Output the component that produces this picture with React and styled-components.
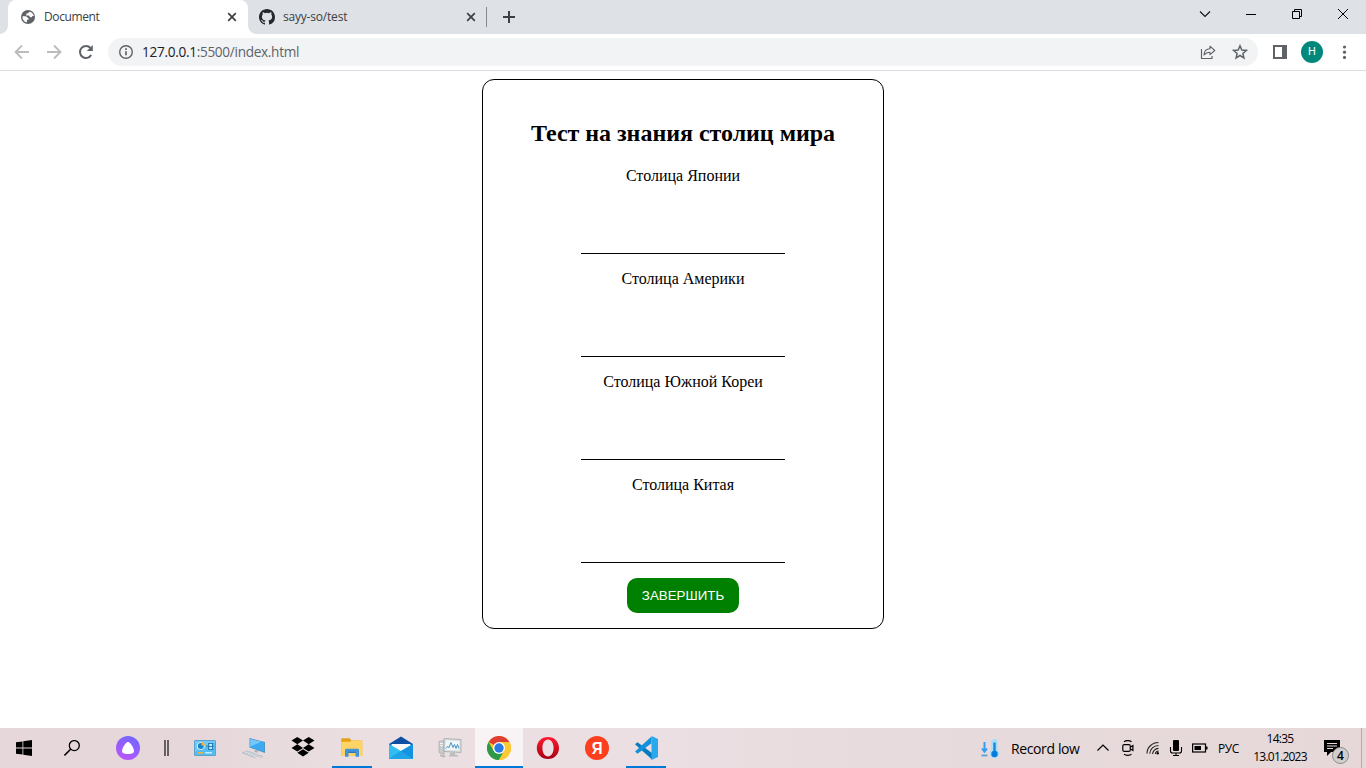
import React from "react";
import styled, { createGlobalStyle } from "styled-components";

const GlobalStyle = createGlobalStyle`
  * { box-sizing: border-box; }
  body { margin: 0; background: #fff; overflow: hidden; }
  svg { display: block; flex: none; }
`;
const ui = `"Open Sans", "Noto Sans", sans-serif`;

const Screen = styled.div`
  width: 1366px;
  height: 768px;
  display: flex;
  flex-direction: column;
  font-family: ${ui};
`;

/* Browser chrome */
const TabStrip = styled.div`
  height: 34px;
  flex: none;
  display: flex;
  background: #dee1e6;
  padding-left: 8px;
`;
const Tab = styled.div`
  position: relative;
  width: ${(p) => p.$width}px;
  height: 34px;
  display: flex;
  align-items: center;
  padding: 0 ${(p) => p.$right}px 0 ${(p) => p.$left}px;
  background: ${(p) => (p.$active ? "#fff" : "transparent")};
  border-radius: 8px 8px 0 0;
  &::before, &::after {
    content: "";
    display: ${(p) => (p.$active ? "block" : "none")};
    position: absolute;
    bottom: 0;
    width: 8px;
    height: 8px;
  }
  &::before { left: -8px; background: radial-gradient(circle at 0 0, transparent 7.5px, #fff 8px); }
  &::after { right: -8px; background: radial-gradient(circle at 100% 0, transparent 7.5px, #fff 8px); }
`;
const TabTitle = styled.span`
  flex: 1;
  margin-left: ${(p) => p.$gap}px;
  font-size: 12px;
  line-height: 16px;
  letter-spacing: ${(p) => p.$spacing}px;
  color: #3c4043;
  white-space: nowrap;
`;
const TabDivider = styled.div`
  width: 1px;
  height: 20px;
  margin-top: 7px;
  background: #868a90;
`;
const NewTab = styled.div`
  margin: 11px 0 0 16px;
`;
const WindowControls = styled.div`
  display: flex;
  align-items: center;
  height: 28px;
  margin-left: auto;
`;
const WindowButton = styled.div`
  width: 46px;
  display: flex;
  justify-content: center;
`;
const Toolbar = styled.div`
  height: 37px;
  flex: none;
  display: flex;
  align-items: center;
  border-bottom: 1px solid #dadce0;
  padding-left: 14px;
`;
const NavButtons = styled.div`
  display: flex;
  flex: none;
  gap: 16px;
  width: 94px;
`;
const AddressBar = styled.div`
  width: 1150px;
  height: 28px;
  flex: none;
  border-radius: 14px;
  background: #f1f3f4;
  display: flex;
  align-items: center;
  padding: 0 10px;
`;
const Url = styled.div`
  flex: 1;
  margin-left: 8px;
  font-size: 13.6px;
  line-height: 20px;
  letter-spacing: -0.3px;
  color: #5f6368;
`;
const Host = styled.span`
  color: #202124;
`;
const AddressActions = styled.div`
  display: flex;
  align-items: center;
  gap: 16px;
`;
const ToolbarActions = styled.div`
  display: flex;
  flex: none;
  align-items: center;
  margin-left: 14px;
`;
const Avatar = styled.div`
  width: 22px;
  height: 22px;
  margin: 0 13px 0 13px;
  border-radius: 50%;
  background: #00897b;
  color: #fff;
  font: 11px/22px Roboto, sans-serif;
  text-align: center;
`;

/* Page */
const Page = styled.main`
  flex: 1;
  padding-top: 8px;
  background: #fff;
  font-family: "Liberation Serif", "Times New Roman", serif;
  color: #000;
`;
const QuizForm = styled.form`
  width: 402px;
  height: 550px;
  margin: 0 auto;
  padding: 40px 15px 15px;
  border: 1px solid #000;
  border-radius: 12px;
  display: flex;
  flex-direction: column;
  align-items: center;
`;
const Heading = styled.h2`
  margin: 0 0 20px;
  font-size: 24px;
  line-height: 27px;
  letter-spacing: -0.03px;
  white-space: nowrap;
`;
const Question = styled.label`
  display: flex;
  flex-direction: column;
  align-items: center;
  height: 103px;
  flex: none;
  font-size: 16px;
  line-height: 18px;
`;
const Answer = styled.input`
  width: 204px;
  height: 53px;
  margin-top: 16px;
  padding: 0;
  border: 0;
  border-bottom: 1px solid #000;
  border-radius: 0;
  background: transparent;
  outline: 0;
`;
const SubmitButton = styled.button`
  width: 112px;
  height: 35px;
  flex: none;
  margin-top: -1px;
  padding: 0;
  border: 0;
  border-radius: 10px;
  background: #008000;
  color: #fff;
  font: 13.333px "Liberation Sans", Arial, sans-serif;
`;

/* Taskbar */
const Taskbar = styled.footer`
  height: 40px;
  flex: none;
  display: flex;
  background: linear-gradient(90deg, #e6d8da 0%, #e6d8da 15%, #ebdfe2 27%, #ecdfe3 48%, #e7dadc 70%, #e6d8d8 100%);
  color: #000;
`;
const StartArea = styled.div`
  display: flex;
  width: 181px;
`;
const Slot = styled.div`
  width: ${(p) => p.$width || 48}px;
  height: 40px;
  display: flex;
  align-items: center;
  justify-content: center;
`;
const Apps = styled.div`
  display: flex;
  gap: 1px;
`;
const AppSlot = styled.div`
  width: 48px;
  height: 40px;
  display: flex;
  flex-direction: column;
  align-items: center;
  justify-content: space-between;
  background: ${(p) => (p.$active ? "#f8f3f4" : "transparent")};
  &::after {
    content: "";
    width: ${(p) => (p.$active ? 48 : 40)}px;
    height: 2px;
    background: ${(p) => (p.$active || p.$running ? "#0078d7" : "transparent")};
  }
`;
const AppIcon = styled.div`
  padding-top: 8px;
`;
const Tray = styled.div`
  display: flex;
  align-items: center;
  margin-left: auto;
`;
const Weather = styled.div`
  display: flex;
  align-items: center;
  width: 116px;
  padding-top: 1px;
  font-size: 14px;
  line-height: 20px;
  letter-spacing: -0.38px;
  white-space: nowrap;
  gap: 11px;
`;
const TrayIcons = styled.div`
  display: flex;
  align-items: center;
`;
const Language = styled.div`
  width: 24px;
  margin-left: 10px;
  font-size: 12px;
  letter-spacing: -0.4px;
`;
const Clock = styled.div`
  width: 56px;
  margin-left: 10px;
  font-size: 12px;
  line-height: 18px;
  letter-spacing: -0.76px;
  text-align: center;
  white-space: nowrap;
`;
const Notifications = styled.div`
  position: relative;
  width: 25px;
  height: 40px;
  margin-left: 16px;
  padding-top: 12px;
`;
const Badge = styled.span`
  position: absolute;
  left: 8px;
  top: 19px;
  width: 17px;
  height: 17px;
  border: 1px solid #8b8b8b;
  border-radius: 50%;
  background: #d0cdce;
  font-size: 12px;
  line-height: 15px;
  font-weight: 600;
  text-align: center;
`;
const ShowDesktop = styled.div`
  width: 5px;
  height: 40px;
  margin-left: 12px;
  border-left: 1px solid #b5a9aa;
`;

const Svg = ({ w = 24, h = w, box = `0 0 ${w} ${h}`, children, ...rest }) => (
  <svg width={w} height={h} viewBox={box} fill="none" {...rest}>{children}</svg>
);

const Close = () => (
  <Svg w={10}><path d="M1.2 1.2l7.6 7.6M8.8 1.2L1.2 8.8" stroke="#3c4043" strokeWidth="1.7" /></Svg>
);
const Globe = () => (
  <Svg w={14}>
    <circle cx="7" cy="7" r="7" fill="#5f6368" />
    <path d="M8.500 1.700L7 3.300 5.600 3.500 5 5.600h3.100l.9 1.600h1.600l.9-1.200h1.300C12.500 3.700 10.800 2.100 8.500 1.700z" fill="#fff" />
    <path d="M1.500 6.300h3.600l2.500 2.200v1.300H5.900v2.600C3 12 1.300 9.300 1.500 6.300z" fill="#fff" />
  </Svg>
);
const Github = () => (
  <Svg w={16}>
    <path fill="#24292f" d="M8 0C3.58 0 0 3.58 0 8c0 3.54 2.29 6.53 5.47 7.59.4.07.55-.17.55-.38 0-.19-.01-.82-.01-1.49-2.01.37-2.53-.49-2.69-.94-.09-.23-.48-.94-.82-1.13-.28-.15-.68-.52-.01-.53.63-.01 1.08.58 1.23.82.72 1.21 1.87.87 2.33.66.07-.52.28-.87.51-1.07-1.78-.2-3.64-.89-3.64-3.95 0-.87.31-1.59.82-2.15-.08-.2-.36-1.02.08-2.12 0 0 .67-.21 2.2.82a7.4 7.4 0 0 1 4 0c1.53-1.04 2.2-.82 2.2-.82.44 1.1.16 1.92.08 2.12.51.56.82 1.27.82 2.15 0 3.07-1.87 3.75-3.65 3.95.29.25.54.73.54 1.48 0 1.07-.01 1.93-.01 2.2 0 .21.15.46.55.38A8 8 0 0 0 16 8c0-4.42-3.58-8-8-8z" />
  </Svg>
);
const Arrow = ({ flip }) => (
  <Svg w={16}>
    <path d={flip ? "M1 8h13M8 1.5L14.5 8 8 14.5" : "M15 8H2M8 1.5L1.5 8 8 14.5"} stroke="#babcbe" strokeWidth="1.8" />
  </Svg>
);
const Reload = () => (
  <Svg w={16}>
    <path d="M13.2 11A6 6 0 1 1 12.5 4" stroke="#5f6368" strokeWidth="2" />
    <path d="M14.8 1v6H8.8z" fill="#5f6368" />
  </Svg>
);
const Info = () => (
  <Svg w={16}>
    <circle cx="8" cy="8" r="6.3" stroke="#5f6368" strokeWidth="1.4" />
    <path d="M8 7.2v4M8 4.3v1.6" stroke="#5f6368" strokeWidth="1.7" />
  </Svg>
);
const Share = () => (
  <Svg w={16}>
    <path d="M1.500 5v9.500h10.500V12" stroke="#5f6368" strokeWidth="1.2" />
    <path d="M4 11c.2-3.8 2.200-6 6-6.200V2.200l4.800 4.300L10 10.700V8.200C7.500 8.200 5.600 9 4 11z" stroke="#5f6368" strokeWidth="1.100" strokeLinejoin="round" />
  </Svg>
);
const Star = () => (
  <Svg w={16}>
    <path d="M8 1.800l1.800 4.200 4.500.4-3.400 3 1 4.500L8 11.500l-3.900 2.400 1-4.500-3.400-3 4.500-.4z" stroke="#5f6368" strokeWidth="1.500" />
  </Svg>
);

const Windows = () => (
  <Svg w={16}>
    <path fill="#000" d="M0 2.300l6.500-.9v6.200H0zM7.300 1.300L16 0v7.600H7.300zM0 8.400h6.500v6.200L0 13.700zM7.300 8.400H16V16l-8.700-1.300z" />
  </Svg>
);
const Search = () => (
  <Svg w={16}>
    <circle cx="10.300" cy="5.600" r="5" stroke="#000" strokeWidth="1.300" />
    <path d="M6.600 9.300L.4 15.500" stroke="#000" strokeWidth="1.500" />
  </Svg>
);
const Alice = () => (
  <Svg w={24}>
    <defs><linearGradient id="alice" x1=".75" y1="0" x2=".25" y2="1"><stop stopColor="#6f67ff" /><stop offset="1" stopColor="#bd54fc" /></linearGradient></defs>
    <circle cx="12" cy="12" r="12" fill="url(#alice)" />
    <path d="M12 6c2.400 0 6 6.500 6 9 0 2.200-2.500 3-6 3s-6-.8-6-3c0-2.500 3.600-9 6-9z" fill="#fff" />
  </Svg>
);
const ControlPanel = () => (
  <Svg w={24}>
    <rect x="1.500" y="4.500" width="21" height="15" rx=".5" fill="#55bdf2" stroke="#5ba3cc" />
    <path d="M2 5h20v2L2 16z" fill="#8bd6fa" opacity=".5" />
    <circle cx="7.800" cy="10" r="3.800" fill="#e9f7ff" />
    <circle cx="7.800" cy="10" r="3" fill="#1680c9" />
    <path d="M8.500 6v3.500h3.300A3.500 3.500 0 0 0 8.500 6z" fill="#f6b32b" />
    <path d="M13 10h2M15.500 7v7M15.500 7.500h5M15.500 10.500h5M15.500 13.500h5M19.500 7.500v6" stroke="#1c6fa8" strokeWidth=".8" />
    <path d="M16.500 8.200h2.500v1.500h-2.500zM16.500 11.200h2.500v1.500h-2.500z" fill="#e3f7ff" />
    <path d="M5 16.800h5.500" stroke="#ffb32e" strokeWidth="1.400" /><path d="M12 16.800h7" stroke="#e2f6ff" strokeWidth="1.200" />
  </Svg>
);
const ThisPc = () => (
  <Svg w={24}>
    <path d="M7.500 2L23 6v11L7.500 11.500z" fill="#4f93be" />
    <path d="M8.200 2.900l14 3.700V16l-14-5z" fill="#3caaf0" />
    <path d="M8.200 2.900l11 2.900-11 4.900z" fill="#7fd0fb" opacity=".8" />
    <path d="M13.500 13.700l3 1-1 2-3.500-1z" fill="#a7b4bc" />
    <path d="M.5 16.800l5.300-1.800 10.500 4.200-4 2.400z" fill="#e7edf0" stroke="#a3afb7" strokeWidth=".7" />
    <path d="M2.500 16.500l9.500 4M4.500 15.800l9.500 3.800M3.500 18l4-1.600M6.500 19.200l4-1.600M9.500 20.400l4-1.600" stroke="#adb9c0" strokeWidth=".5" />
    <path d="M16.500 20.200l2-.8 2.500 1-2 1z" fill="#dce3e7" stroke="#a3afb7" strokeWidth=".5" />
  </Svg>
);
const Dropbox = () => (
  <Svg w={24}>
    <path fill="#000" d="M6.300 1L12 4.600 6.300 8.200.5 4.600zM17.700 1l5.800 3.600-5.800 3.600L12 4.600zM.5 11.900l5.800-3.700 5.700 3.700-5.700 3.600zM12 11.900l5.700-3.700 5.800 3.700-5.800 3.600zM6.300 16.800l5.700-3.600 5.700 3.600-5.700 3.700z" />
  </Svg>
);
const Explorer = () => (
  <Svg w={24}>
    <path d="M1.200 3c0-.4.3-.7.700-.7h8l1.300 2.200h11v15h-21z" fill="#e6a117" />
    <path d="M1.200 5.700h9l1.500-1.200h10.700v15.300H1.200z" fill="#ffd467" />
    <path d="M5 14.300c0-.9.5-1.500 1.400-1.500h11.200c.9 0 1.400.6 1.400 1.500v6.500h-3.500v-3.800h-7v3.800H5z" fill="#4393d8" />
    <path d="M8.500 17h7v-1.300h-7z" fill="#2c73b5" />
  </Svg>
);
const Mail = () => (
  <Svg w={24}>
    <path d="M0 8L12 .5 24 8v4H0z" fill="#0c4fa3" />
    <path d="M2.500 8h19v3L12 16l-9.500-5z" fill="#f8f8f8" />
    <path d="M0 8l12 7 12-7v15H0z" fill="#32bdf0" />
    <path d="M24 8v15H0l12-8z" fill="#1493e2" />
    <path d="M0 23l12-8 12 8z" fill="#20a4e8" />
  </Svg>
);
const Monitor = () => (
  <Svg w={24}>
    <path d="M1 5.500l5-1v14l-5-2z" fill="#c9cccc" stroke="#9fa3a4" strokeWidth=".6" />
    <path d="M2 7.500h3M2 9.500h3" stroke="#f1f4f4" />
    <path d="M6 2.500l17 1v13l-17-1z" fill="#d9dcdc" stroke="#a4a9aa" strokeWidth=".8" />
    <path d="M7.500 4.300l14 .8v9.500l-14-.7z" fill="#eef6fa" />
    <path d="M8 12.500l1.500-2 1.500 1 2-5 2 5 1.500-3 1.500 4 1.500-4 1.500 4" stroke="#3d87b8" strokeWidth=".9" />
    <path d="M12 16.500h5v2.500h3v1.500h-9V19h1z" fill="#b9bebf" /><path d="M2 18.500l6 1.500-2 1.500-4-1.500z" fill="#b0b5b6" />
  </Svg>
);
const Chrome = () => (
  <Svg w={24}>
    <circle cx="12" cy="12" r="12" fill="#fcc934" />
    <path d="M12 12L1.600 6A12 12 0 0 1 22.400 6z" fill="#df3e32" />
    <path d="M1.600 6A12 12 0 0 0 12 24l5.200-9L12 12 6.800 15z" fill="#2b9a48" />
    <path d="M12 6h10.400A12 12 0 0 1 12 24l5.200-9z" fill="#fcc934" />
    <circle cx="12" cy="12" r="6" fill="#fff" /><circle cx="12" cy="12" r="4.700" fill="#2b78e6" />
  </Svg>
);
const Opera = () => (
  <Svg w={24}>
    <defs><linearGradient id="opera" x2="0" y2="1"><stop stopColor="#ff1b2d" /><stop offset="1" stopColor="#a70014" /></linearGradient></defs>
    <path fillRule="evenodd" d="M12 1c6.500 0 11 4.800 11 11s-4.500 11-11 11S.8 18.200.8 12 5.500 1 12 1zm0 2.500c-3.300 0-5.600 3.700-5.600 8.500s2.300 8.500 5.600 8.500 5.600-3.700 5.600-8.500-2.300-8.500-5.600-8.500z" fill="url(#opera)" />
  </Svg>
);
const YandexDisc = styled.div`
  width: 24px;
  height: 24px;
  border-radius: 50%;
  background: #fc3f1d;
  color: #fff;
  font: bold 17px/25px "Liberation Sans", sans-serif;
  text-align: center;
`;
const YandexLetter = styled.span`
  display: inline-block;
  transform: scaleX(0.88);
`;
const VsCode = () => (
  <Svg w={24}>
    <path d="M1 8.300l2.500-2L18 17v6.500z" fill="#087bc0" />
    <path d="M17.500.5v6.700L3.500 17.700 1 15.600z" fill="#1292d8" />
    <path d="M17.500 0L24 3v18l-6.500 3z" fill="#29a8eb" />
  </Svg>
);
const Thermometer = () => (
  <Svg w={20}>
    <path d="M4.500 3v10.500M2 9.500l2.500 3.200L7 9.500" stroke="#329ff4" strokeWidth="2" />
    <path d="M1.500 16.500h6" stroke="#5d9ed2" strokeWidth="1.800" />
    <path d="M11.300 3.200a3.200 3.200 0 0 1 6.400 0V11a4.700 4.700 0 1 1-6.400 0z" fill="#a5ddfb" />
    <path d="M14.500 3.500v11" stroke="#1786dc" strokeWidth="2.400" /><circle cx="14.500" cy="15" r="3.200" fill="#087cd7" />
  </Svg>
);
const Meet = () => (
  <Svg w={14} h={18}>
    <rect x="1.800" y="5.600" width="7.500" height="6.800" rx="1.500" stroke="#000" strokeWidth="1.200" />
    <path d="M9.500 8l2.400-1.500v5L9.500 10M3 2.800C4.500 1.300 9 1.300 10.500 2.800M3 15.200c1.500 1.500 6 1.500 7.500 0" stroke="#000" strokeWidth="1.200" />
  </Svg>
);
const Wifi = () => (
  <Svg w={14}>
    <path d="M1 12.500C1 6.500 6 1.500 12.500 1.500M3.800 12.800c0-4.500 4-8.300 8.700-8.300M6.600 13c0-3 2.700-5.600 5.900-5.600M9.300 13c0-1.500 1.500-2.900 3.200-2.900" stroke="#222" strokeWidth="1.100" />
    <circle cx="11.700" cy="12.200" r="1.200" fill="#000" />
  </Svg>
);
const Mic = () => (
  <Svg w={14} h={18}>
    <rect x="4" y="1" width="6" height="11" rx="1" fill="#000" />
    <path d="M1.500 8v4c0 1.200 1 2 2.200 2h6.600c1.200 0 2.200-.8 2.200-2V8M7 14v2.500M4 16.500h6" stroke="#000" strokeWidth="1.100" />
  </Svg>
);
const Battery = () => (
  <Svg w={16} h={10}>
    <rect x=".6" y="1" width="12.900" height="8" stroke="#000" strokeWidth="1.200" />
    <path d="M2.500 3h6.500v4H2.500zM13.500 3.500h2v3h-2z" fill="#000" />
  </Svg>
);

const questions = ["Столица Японии", "Столица Америки", "Столица Южной Кореи", "Столица Китая"];
const apps = [
  { name: "control", icon: <ControlPanel /> },
  { name: "pc", icon: <ThisPc /> },
  { name: "dropbox", icon: <Dropbox /> },
  { name: "explorer", icon: <Explorer />, running: true },
  { name: "mail", icon: <Mail /> },
  { name: "monitor", icon: <Monitor /> },
  { name: "chrome", icon: <Chrome />, active: true },
  { name: "opera", icon: <Opera /> },
  { name: "yandex", icon: <YandexDisc><YandexLetter>Я</YandexLetter></YandexDisc> },
  { name: "code", icon: <VsCode />, running: true },
];

export default function App() {
  return (
    <Screen>
      <GlobalStyle />
      <TabStrip>
        <Tab $active $width={240} $left={13} $right={11}>
          <Globe /><TabTitle $gap={9} $spacing={-0.38}>Document</TabTitle><Close />
        </Tab>
        <Tab $width={238} $left={11} $right={10}>
          <Github /><TabTitle $gap={8} $spacing={-0.2}>sayy-so/test</TabTitle><Close />
        </Tab>
        <TabDivider />
        <NewTab><Svg w={12}><path d="M6 0v12M0 6h12" stroke="#3c4043" strokeWidth="2" /></Svg></NewTab>
        <WindowControls>
          <WindowButton><Svg w={12}><path d="M1 3.500l5 5 5-5" stroke="#111" strokeWidth="1.100" /></Svg></WindowButton>
          <WindowButton><Svg w={10}><path d="M0 5.500h10" stroke="#000" /></Svg></WindowButton>
          <WindowButton><Svg w={10}><path d="M.5 2.500h7v7h-7zM2.500 2.500v-2h7v7h-2" stroke="#000" /></Svg></WindowButton>
          <WindowButton><Svg w={10}><path d="M0 0l10 10M10 0L0 10" stroke="#000" /></Svg></WindowButton>
        </WindowControls>
      </TabStrip>
      <Toolbar>
        <NavButtons><Arrow /><Arrow flip /><Reload /></NavButtons>
        <AddressBar>
          <Info />
          <Url><Host>127.0.0.1</Host>:5500/index.html</Url>
          <AddressActions><Share /><Star /></AddressActions>
        </AddressBar>
        <ToolbarActions>
          <Svg w={16}><path d="M2 2h12v12H2z" stroke="#5f6368" strokeWidth="2" /><path d="M10 2h4v12h-4z" fill="#5f6368" /></Svg>
          <Avatar>Н</Avatar>
          <Svg w={16}><g fill="#5f6368"><circle cx="8.500" cy="3" r="1.600" /><circle cx="8.500" cy="8.200" r="1.600" /><circle cx="8.500" cy="13.400" r="1.600" /></g></Svg>
        </ToolbarActions>
      </Toolbar>
      <Page>
        <QuizForm>
          <Heading>Тест на знания столиц мира</Heading>
          {questions.map((text) => (
            <Question key={text}>{text}<Answer type="text" /></Question>
          ))}
          <SubmitButton type="button">ЗАВЕРШИТЬ</SubmitButton>
        </QuizForm>
      </Page>
      <Taskbar>
        <StartArea>
          <Slot><Windows /></Slot>
          <Slot><Search /></Slot>
          <Slot $width={64}><Alice /></Slot>
          <Slot $width={12}><Svg w={5} h={16}><path d="M1 0v16M4 0v16" stroke="#000" strokeWidth="1.100" /></Svg></Slot>
        </StartArea>
        <Apps>
          {apps.map((app) => (
            <AppSlot key={app.name} $active={app.active} $running={app.running}><AppIcon>{app.icon}</AppIcon></AppSlot>
          ))}
        </Apps>
        <Tray>
          <Weather><Thermometer />Record low</Weather>
          <TrayIcons>
            <Svg w={14}><path d="M1.500 9.500L7 4l5.500 5.500" stroke="#000" strokeWidth="1.200" /></Svg>
            <Slot $width={36}><Meet /></Slot>
            <Wifi />
            <Slot $width={32}><Mic /></Slot>
            <Battery />
          </TrayIcons>
          <Language>РУС</Language>
          <Clock>14:35<br />13.01.2023</Clock>
          <Notifications>
            <Svg w={16}><path d="M0 0h16v12H7l-4 4v-4H0z" fill="#000" /><path d="M3 3.500h10M3 6h10M3 8.500h6" stroke="#e7d8da" /></Svg>
            <Badge>4</Badge>
          </Notifications>
          <ShowDesktop />
        </Tray>
      </Taskbar>
    </Screen>
  );
}
